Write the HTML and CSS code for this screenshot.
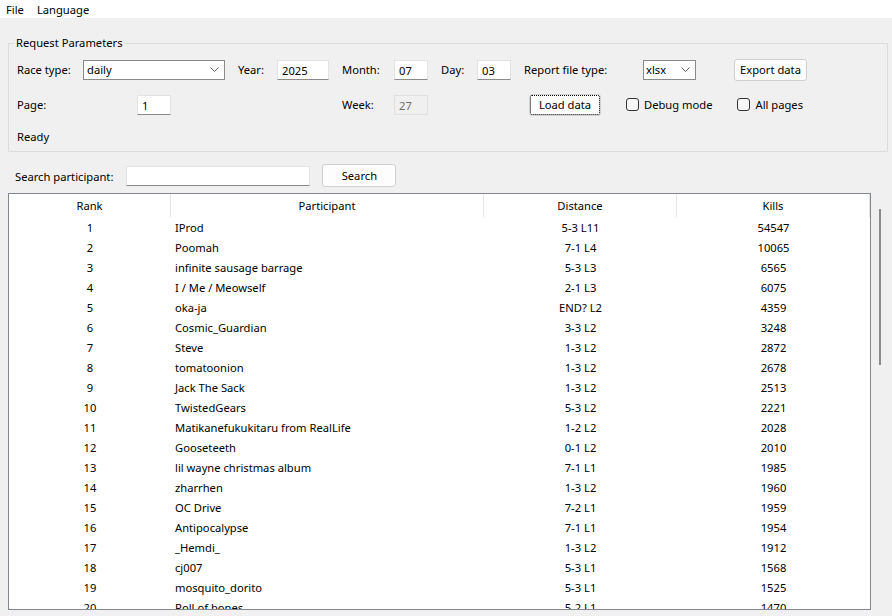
FILE: index.html
```html
<!DOCTYPE html>
<html>
<head>
<meta charset="utf-8">
<link rel="stylesheet" href="styles.css">
</head>
<body>
<div class="menubar"><span class="menu-item">File</span><span class="menu-item">Language</span></div>
<div class="window">
  <fieldset class="params">
    <legend class="params-title">Request Parameters</legend>
    <div class="grid">
      <span class="lbl">Race type:</span>
      <div class="combo combo-race"><span>daily</span><svg class="chev" width="9" height="5" viewBox="0 0 9 5"><polyline points="0.5,0.5 4.5,4.5 8.5,0.5" fill="none" stroke="#606060" stroke-width="1"/></svg></div>
      <span class="lbl lbl-pad">Year:</span>
      <div class="entry entry-year">2025</div>
      <span class="lbl lbl-pad">Month:</span>
      <div class="entry entry-sm">07</div>
      <span class="lbl lbl-pad">Day:</span>
      <div class="entry entry-sm">03</div>
      <span class="lbl lbl-pad">Report file type:</span>
      <div class="combo combo-type"><span>xlsx</span><svg class="chev" width="9" height="5" viewBox="0 0 9 5"><polyline points="0.5,0.5 4.5,4.5 8.5,0.5" fill="none" stroke="#606060" stroke-width="1"/></svg></div>
      <div class="btn btn-export">Export data</div>

      <span class="lbl">Page:</span>
      <div class="entry entry-sm entry-page">1</div>
      <span></span>
      <span></span>
      <span class="lbl lbl-pad">Week:</span>
      <div class="entry entry-sm entry-disabled">27</div>
      <span></span>
      <span></span>
      <div class="actions">
        <div class="btn btn-load">Load data</div>
        <label class="check"><span class="box"></span>Debug mode</label>
        <label class="check"><span class="box"></span>All pages</label>
      </div>

      <span class="lbl status">Ready</span>
    </div>
  </fieldset>

  <div class="search-row">
    <span class="lbl search-lbl">Search participant:</span>
    <div class="entry entry-search"></div>
    <div class="btn btn-search">Search</div>
  </div>

  <div class="table-area">
    <div class="tree">
      <div class="tree-head">
        <div class="th">Rank</div>
        <div class="th">Participant</div>
        <div class="th">Distance</div>
        <div class="th">Kills</div>
      </div>
      <div class="tree-body">
        <div class="tr"><span class="c">1</span><span class="l">IProd</span><span class="c">5-3 L11</span><span class="c">54547</span></div>
        <div class="tr"><span class="c">2</span><span class="l">Poomah</span><span class="c">7-1 L4</span><span class="c">10065</span></div>
        <div class="tr"><span class="c">3</span><span class="l">infinite sausage barrage</span><span class="c">5-3 L3</span><span class="c">6565</span></div>
        <div class="tr"><span class="c">4</span><span class="l">I / Me / Meowself</span><span class="c">2-1 L3</span><span class="c">6075</span></div>
        <div class="tr"><span class="c">5</span><span class="l">oka-ja</span><span class="c">END? L2</span><span class="c">4359</span></div>
        <div class="tr"><span class="c">6</span><span class="l">Cosmic_Guardian</span><span class="c">3-3 L2</span><span class="c">3248</span></div>
        <div class="tr"><span class="c">7</span><span class="l">Steve</span><span class="c">1-3 L2</span><span class="c">2872</span></div>
        <div class="tr"><span class="c">8</span><span class="l">tomatoonion</span><span class="c">1-3 L2</span><span class="c">2678</span></div>
        <div class="tr"><span class="c">9</span><span class="l">Jack The Sack</span><span class="c">1-3 L2</span><span class="c">2513</span></div>
        <div class="tr"><span class="c">10</span><span class="l">TwistedGears</span><span class="c">5-3 L2</span><span class="c">2221</span></div>
        <div class="tr"><span class="c">11</span><span class="l">Matikanefukukitaru from RealLife</span><span class="c">1-2 L2</span><span class="c">2028</span></div>
        <div class="tr"><span class="c">12</span><span class="l">Gooseteeth</span><span class="c">0-1 L2</span><span class="c">2010</span></div>
        <div class="tr"><span class="c">13</span><span class="l">lil wayne christmas album</span><span class="c">7-1 L1</span><span class="c">1985</span></div>
        <div class="tr"><span class="c">14</span><span class="l">zharrhen</span><span class="c">1-3 L2</span><span class="c">1960</span></div>
        <div class="tr"><span class="c">15</span><span class="l">OC Drive</span><span class="c">7-2 L1</span><span class="c">1959</span></div>
        <div class="tr"><span class="c">16</span><span class="l">Antipocalypse</span><span class="c">7-1 L1</span><span class="c">1954</span></div>
        <div class="tr"><span class="c">17</span><span class="l">_Hemdi_</span><span class="c">1-3 L2</span><span class="c">1912</span></div>
        <div class="tr"><span class="c">18</span><span class="l">cj007</span><span class="c">5-3 L1</span><span class="c">1568</span></div>
        <div class="tr"><span class="c">19</span><span class="l">mosquito_dorito</span><span class="c">5-3 L1</span><span class="c">1525</span></div>
        <div class="tr"><span class="c">20</span><span class="l">Roll of bones</span><span class="c">5-2 L1</span><span class="c">1470</span></div>
      </div>
    </div>
    <div class="scroll"><div class="thumb"></div></div>
  </div>
</div>
</body>
</html>
```

FILE: styles.css
```css
* { box-sizing: border-box; }
html, body { margin: 0; padding: 0; }
body {
  width: 892px;
  height: 616px;
  overflow: hidden;
  background: #f0f0f0;
  font-family: "Noto Sans", sans-serif;
  font-size: 11.2px;
  line-height: 16px;
  color: #000;
}
.menubar {
  height: 18px;
  background: #fff;
  display: flex;
  align-items: center;
  padding: 1px 0 0 6px;
  gap: 13px;
}
.window { padding: 0 0 0 8px; }
.params {
  margin: 17px 0 0 0;
  width: 880px;
  border: 1px solid #dcdcdc;
  padding: 7px 0 7px 5px;
  min-width: 0;
}
.params-title { padding: 0 2px; }
.grid {
  margin-left: 3px;
  display: grid;
  grid-template-columns: 66px 155px 39px 65px 52px 47px 36px 47px 119px 91px auto;
  grid-template-rows: 23px 23px 16px;
  row-gap: 12px;
  align-items: center;
}
.lbl { white-space: nowrap; }
.status { margin-top: 1px; }
.entry {
  height: 20px;
  background: #fff;
  border: 1px solid #e3e3e3;
  border-bottom-color: #8a8a8a;
  padding: 1px 0 0 4px;
  line-height: 17px;
}
.entry-year { width: 52px; }
.entry-sm { width: 34px; }
.entry-page { margin-left: 54px; }
.entry-disabled { background: #f0f0f0; border-color: #e0e0e0; color: #6d6d6d; }
.combo {
  height: 20px;
  background: #fff;
  border: 1px solid #8a8a8a;
  display: flex;
  align-items: center;
  justify-content: space-between;
  padding: 1px 5px 0 3px;
}
.combo-race { width: 142px; }
.combo-type { width: 53px; padding-left: 2px; }
.chev { display: block; margin-top: -1px; }
.btn {
  height: 22px;
  border: 1px solid #d0d0d0;
  border-radius: 3px;
  background: #fdfdfd;
  display: flex;
  align-items: center;
  justify-content: center;
  padding-top: 1px;
}
.btn-export { width: 73px; }
.actions {
  grid-column: 9 / span 3;
  display: flex;
  align-items: center;
  gap: 25px;
  padding-left: 5px;
}
.btn-load {
  width: 72px;
  outline: 1px dotted #000;
  outline-offset: -2px;
}
.check { display: flex; align-items: center; gap: 5px; white-space: nowrap; }
.box {
  width: 13px;
  height: 13px;
  border: 1px solid #333;
  border-radius: 3px;
  background: #f7f7f7;
}
.search-row {
  margin-top: 12px;
  height: 23px;
  display: flex;
  align-items: center;
  padding-left: 7px;
}
.search-lbl { padding-top: 2px; }
.entry-search { width: 184px; margin-left: 13px; }
.btn-search { width: 74px; height: 23px; margin-left: 12px; }
.table-area { display: flex; margin-top: 6px; }
.tree {
  flex: 0 0 auto;
  width: 863px;
  height: 417px;
  border: 1px solid #828790;
  background: #fff;
  overflow: hidden;
}
.tree-head { display: flex; height: 23px; }
.th {
  display: flex;
  align-items: center;
  justify-content: center;
  border-right: 1px solid #e5e5e5;
  padding-top: 0;
}
.th:nth-child(1), .tr > :nth-child(1) { width: 162px; }
.th:nth-child(2), .tr > :nth-child(2) { width: 313px; }
.th:nth-child(3), .tr > :nth-child(3) { width: 193px; }
.th:nth-child(4), .tr > :nth-child(4) { width: 193px; }
.tr { display: flex; height: 20px; align-items: center; padding-top: 2px; }
.c { text-align: center; }
.l { padding-left: 4px; white-space: nowrap; }
.scroll { flex: 0 0 auto; width: 21px; padding: 16px 0 0 8px; }
.thumb { width: 2px; height: 156px; background: #8a8a8a; }
```
